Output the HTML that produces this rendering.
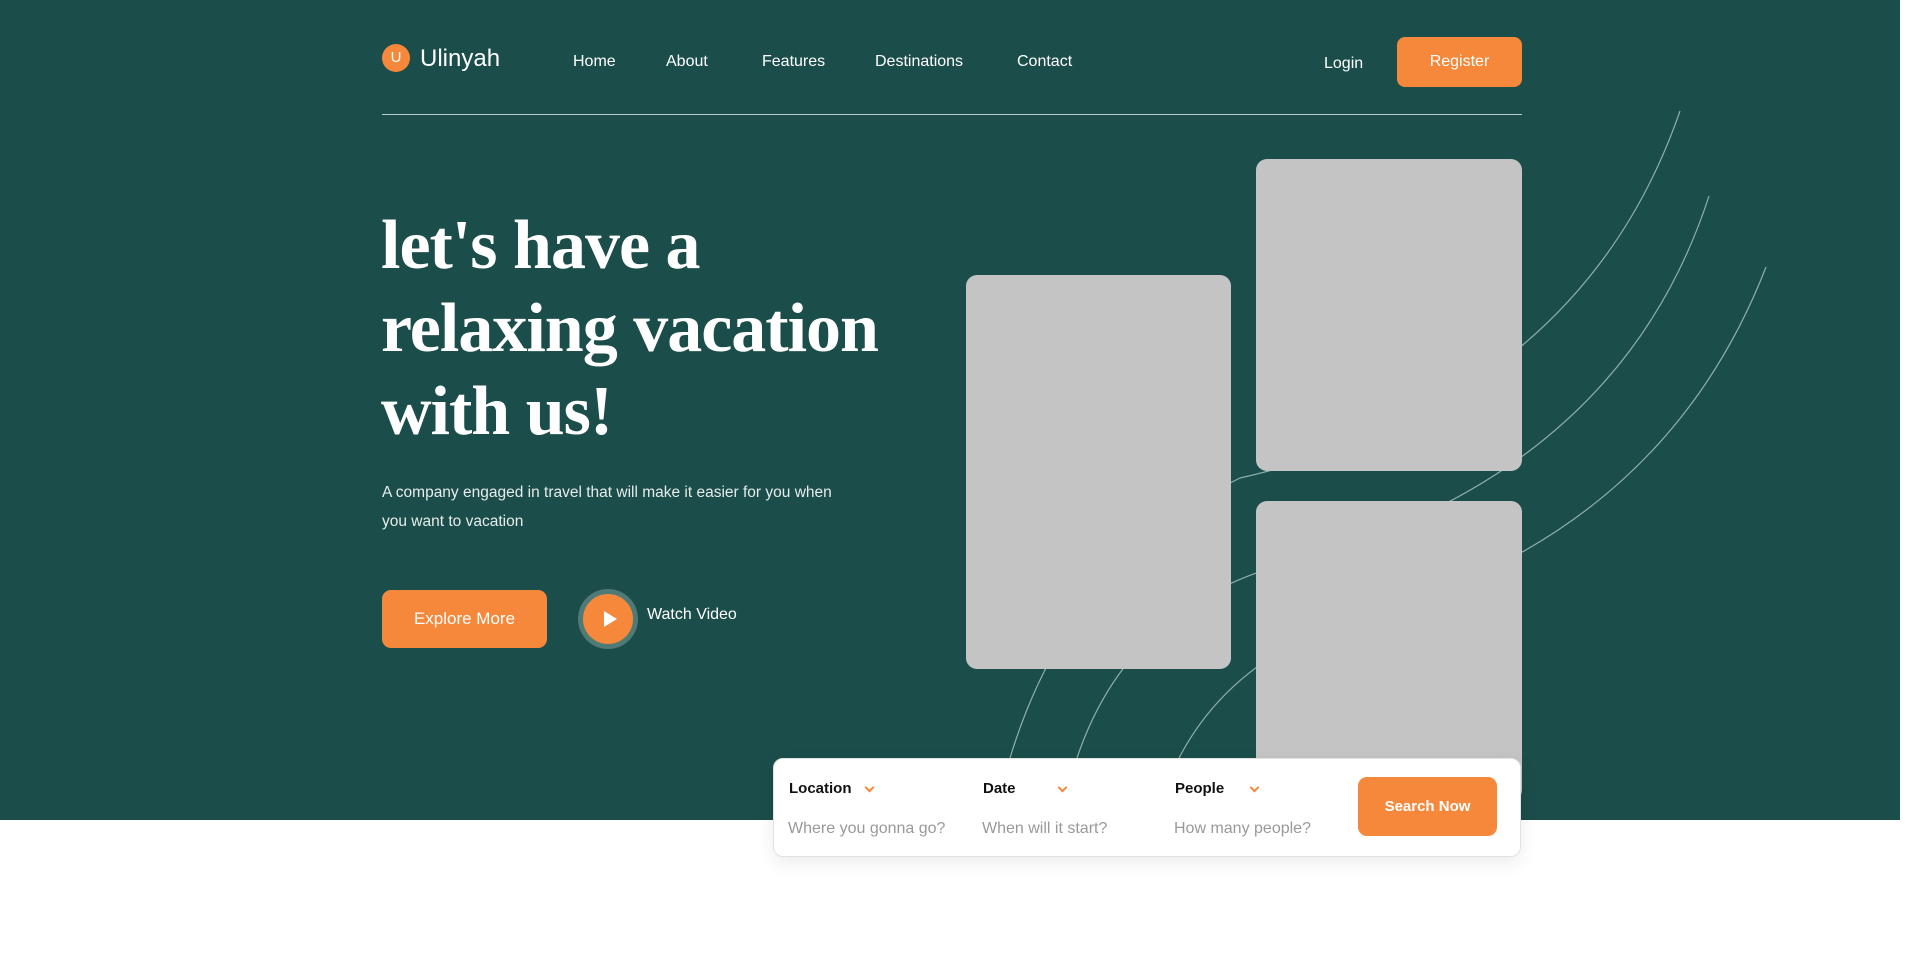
<!DOCTYPE html>
<html><head><meta charset="utf-8"><style>
*{margin:0;padding:0;box-sizing:border-box}
body{width:1906px;height:969px;background:#fff;position:relative;overflow:hidden;font-family:"Liberation Sans",sans-serif}
.hero{position:absolute;left:0;top:0;width:1900px;height:820px;background:#1b4d4a}
.a{position:absolute}
.nav{color:#fff;font-size:16px;top:53px}
.img{position:absolute;background:#c4c4c4;border-radius:11px}
.lbl{font-size:15px;font-weight:bold;color:#111;top:780px}
.ph{font-size:16px;color:#999;top:820px}
.chev{position:absolute;top:4px;width:7px;height:7px;border-right:2px solid #f5883a;border-bottom:2px solid #f5883a;transform:rotate(45deg)}
</style></head><body>
<div class="hero"></div>
<svg class="a" style="left:0;top:0" width="1906" height="969">
<g fill="none" stroke="#8fb0ad" stroke-width="1.2">
<path d="M1680 111 Q1580 400 1240 478 Q1070 560 1010 758"/>
<path d="M1709 196 Q1620 470 1300 560 Q1130 600 1077 758"/>
<path d="M1766 267 Q1660 540 1350 620 Q1230 660 1179 758"/>
</g></svg>
<div class="a" style="left:382px;top:44px;width:28px;height:28px;border-radius:50%;background:#f5883a;color:#fff;font-size:15px;text-align:center;line-height:28px">U</div>
<div class="a" style="left:420px;top:45px;color:#fff;font-size:24px">Ulinyah</div>
<div class="a nav" style="left:573px">Home</div>
<div class="a nav" style="left:666px">About</div>
<div class="a nav" style="left:762px">Features</div>
<div class="a nav" style="left:875px">Destinations</div>
<div class="a nav" style="left:1017px">Contact</div>
<div class="a nav" style="left:1324px;top:55px">Login</div>
<div class="a" style="left:1397px;top:37px;width:125px;height:50px;border-radius:8px;background:#f5883a;color:#fff;font-size:16px;text-align:center;line-height:50px">Register</div>
<div class="a" style="left:382px;top:114px;width:1140px;height:1px;background:#b9c9c7"></div>
<div class="a" style="left:381px;top:204px;color:#fff;font-family:'Liberation Serif',serif;font-weight:bold;font-size:70px;line-height:83px;letter-spacing:-1px;white-space:nowrap">let's have a<br>relaxing vacation<br>with us!</div>
<div class="a" style="left:382px;top:478px;color:#e6ecea;font-size:15.5px;line-height:29px;width:470px">A company engaged in travel that will make it easier for you when you want to vacation</div>
<div class="a" style="left:382px;top:590px;width:165px;height:58px;border-radius:9px;background:#f5883a;color:#fff;font-size:17px;text-align:center;line-height:58px">Explore More</div>
<div class="a" style="left:578px;top:589px;width:60px;height:60px;border-radius:50%;background:#f5883a;border:5px solid #4f7a76"></div>
<div class="a" style="left:604px;top:611px;width:0;height:0;border-left:13px solid #fff;border-top:8px solid transparent;border-bottom:8px solid transparent"></div>
<div class="a" style="left:647px;top:606px;color:#fff;font-size:16px">Watch Video</div>
<div class="img" style="left:966px;top:275px;width:265px;height:394px"></div>
<div class="img" style="left:1256px;top:159px;width:266px;height:312px"></div>
<div class="img" style="left:1256px;top:501px;width:266px;height:300px"></div>
<div class="a" style="left:773px;top:758px;width:748px;height:99px;background:#fff;border-radius:10px;border:1px solid #e2e2e2;box-shadow:0 6px 18px rgba(0,0,0,.08)"></div>
<div class="a lbl" style="left:789px">Location<span class="chev" style="left:77px"></span></div>
<div class="a lbl" style="left:983px">Date<span class="chev" style="left:76px"></span></div>
<div class="a lbl" style="left:1175px">People<span class="chev" style="left:76px"></span></div>
<div class="a ph" style="left:788px">Where you gonna go?</div>
<div class="a ph" style="left:982px">When will it start?</div>
<div class="a ph" style="left:1174px">How many people?</div>
<div class="a" style="left:1358px;top:777px;width:139px;height:59px;border-radius:9px;background:#f5883a;color:#fff;font-size:15px;font-weight:bold;text-align:center;line-height:59px">Search Now</div>
</body></html>
